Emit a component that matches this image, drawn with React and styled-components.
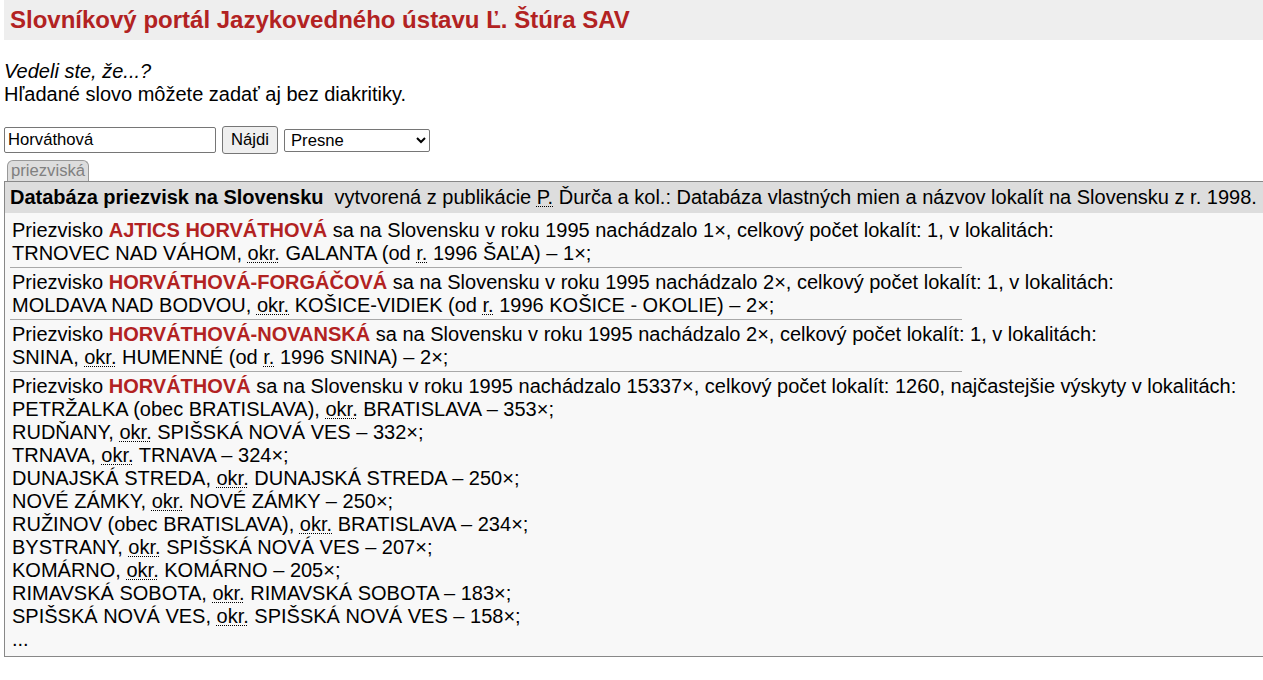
import React from "react";
import styled, { createGlobalStyle } from "styled-components";

const Global = createGlobalStyle`
  html, body { margin: 0; padding: 0; background: #fff; }
  body {
    margin: 0 0 0 4px;
    overflow-x: hidden;
    font-family: "Liberation Sans", Arial, sans-serif;
    font-size: 20px;
    color: #000;
  }
`;

const TitleBar = styled.div`
  background: #eeeeee;
  height: 40px;
  display: flex;
  align-items: center;
  padding-left: 6px;
`;

const Title = styled.h1`
  margin: 0;
  font-size: 24px;
  font-weight: bold;
  color: #b22222;
`;

const Hint = styled.div`
  margin: 20px 0;
  line-height: 23px;
`;

const HintTitle = styled.div`
  font-style: italic;
`;

const SearchForm = styled.form`
  display: flex;
  align-items: center;
  gap: 6px;
  height: 28px;
  margin: 0;
`;

const TextInput = styled.input`
  box-sizing: border-box;
  width: 212px;
  height: 26px;
  padding: 1px 3px;
  border: 1px solid #767676;
  border-radius: 2px;
  font-family: "Liberation Sans", Arial, sans-serif;
  font-size: 16.67px;
  color: #000;
  background: #fff;
`;

const Button = styled.button`
  box-sizing: border-box;
  height: 28px;
  width: 56px;
  padding: 1px 6px;
  border: 1px solid #767676;
  border-radius: 3px;
  background: #efefef;
  font-family: "Liberation Sans", Arial, sans-serif;
  font-size: 16.67px;
  color: #000;
`;

const Select = styled.select`
  box-sizing: border-box;
  width: 146px;
  height: 23px;
  border: 1px solid #767676;
  border-radius: 2px;
  background: #fff;
  font-family: "Liberation Sans", Arial, sans-serif;
  font-size: 16.67px;
  color: #000;
  padding: 0 2px;
`;

const Tabs = styled.div`
  display: flex;
  margin-top: 6px;
  padding-left: 3px;
`;

const Tab = styled.div`
  box-sizing: border-box;
  height: 21px;
  padding: 0 3px;
  border: 1px solid #999;
  border-bottom: none;
  border-radius: 6px 6px 0 0;
  background: #dddddd;
  color: #808080;
  font-size: 16.67px;
  line-height: 20px;
`;

const Box = styled.div`
  width: calc(100% + 20px);
  border: 1px solid #888;
  background: #f8f8f8;
`;

const BoxHeader = styled.div`
  background: #dddddd;
  padding: 4px 5px;
  line-height: 23px;
  white-space: nowrap;
`;

const Strong = styled.b`
  margin-right: 11px;
`;

const Abbr = styled.abbr`
  text-decoration: underline dotted;
  text-decoration-thickness: 1px;
  text-underline-offset: 2px;
`;

const Entries = styled.div`
  padding: 3px 5px 3px;
`;

const Entry = styled.div`
  padding: 3px 2px 2px;
  line-height: 23px;
`;

const Rule = styled.div`
  width: 952px;
  height: 1px;
  background: #a8a8a8;
`;

const Name = styled.b`
  color: #b22222;
`;

const Line = styled.div``;

const entries = [
  {
    name: "AJTICS HORVÁTHOVÁ",
    count: "1",
    lok: "1",
    label: "v lokalitách:",
    places: [{ n: "TRNOVEC NAD VÁHOM", o: "GALANTA", s: "ŠAĽA", c: "1" }],
  },
  {
    name: "HORVÁTHOVÁ-FORGÁČOVÁ",
    count: "2",
    lok: "1",
    label: "v lokalitách:",
    places: [{ n: "MOLDAVA NAD BODVOU", o: "KOŠICE-VIDIEK", s: "KOŠICE - OKOLIE", c: "2" }],
  },
  {
    name: "HORVÁTHOVÁ-NOVANSKÁ",
    count: "2",
    lok: "1",
    label: "v lokalitách:",
    places: [{ n: "SNINA", o: "HUMENNÉ", s: "SNINA", c: "2" }],
  },
  {
    name: "HORVÁTHOVÁ",
    count: "15337",
    lok: "1260",
    label: "najčastejšie výskyty v lokalitách:",
    more: true,
    places: [
      { n: "PETRŽALKA (obec BRATISLAVA)", o: "BRATISLAVA", c: "353" },
      { n: "RUDŇANY", o: "SPIŠSKÁ NOVÁ VES", c: "332" },
      { n: "TRNAVA", o: "TRNAVA", c: "324" },
      { n: "DUNAJSKÁ STREDA", o: "DUNAJSKÁ STREDA", c: "250" },
      { n: "NOVÉ ZÁMKY", o: "NOVÉ ZÁMKY", c: "250" },
      { n: "RUŽINOV (obec BRATISLAVA)", o: "BRATISLAVA", c: "234" },
      { n: "BYSTRANY", o: "SPIŠSKÁ NOVÁ VES", c: "207" },
      { n: "KOMÁRNO", o: "KOMÁRNO", c: "205" },
      { n: "RIMAVSKÁ SOBOTA", o: "RIMAVSKÁ SOBOTA", c: "183" },
      { n: "SPIŠSKÁ NOVÁ VES", o: "SPIŠSKÁ NOVÁ VES", c: "158" },
    ],
  },
];

function Place({ p }) {
  return (
    <Line>
      {p.n}, <Abbr title="okres">okr.</Abbr> {p.o}
      {p.s ? (
        <>
          {" "}(od <Abbr title="rok">r.</Abbr> 1996 {p.s})
        </>
      ) : null}{" "}
      – {p.c}×;
    </Line>
  );
}

export default function App() {
  return (
    <>
      <Global />
      <TitleBar>
        <Title>Slovníkový portál Jazykovedného ústavu Ľ. Štúra SAV</Title>
      </TitleBar>
      <Hint>
        <HintTitle>Vedeli ste, že...?</HintTitle>
        <div>Hľadané slovo môžete zadať aj bez diakritiky.</div>
      </Hint>
      <SearchForm onSubmit={(e) => e.preventDefault()}>
        <TextInput defaultValue="Horváthová" />
        <Button type="submit">Nájdi</Button>
        <Select defaultValue="presne">
          <option value="presne">Presne</option>
          <option value="zaciatok">Začiatok</option>
        </Select>
      </SearchForm>
      <Tabs>
        <Tab>priezviská</Tab>
      </Tabs>
      <Box>
        <BoxHeader>
          <Strong>Databáza priezvisk na Slovensku</Strong>
          vytvorená z publikácie <Abbr title="Peter">P.</Abbr> Ďurča a kol.: Databáza vlastných mien a názvov lokalít na Slovensku z r. 1998.
        </BoxHeader>
        <Entries>
          {entries.map((e, i) => (
            <React.Fragment key={e.name}>
              {i > 0 && <Rule />}
              <Entry>
                <Line>
                  Priezvisko <Name>{e.name}</Name> sa na Slovensku v roku 1995 nachádzalo {e.count}×, celkový počet lokalít: {e.lok}, {e.label}
                </Line>
                {e.places.map((p) => (
                  <Place key={p.n} p={p} />
                ))}
                {e.more && <Line>...</Line>}
              </Entry>
            </React.Fragment>
          ))}
        </Entries>
      </Box>
    </>
  );
}
